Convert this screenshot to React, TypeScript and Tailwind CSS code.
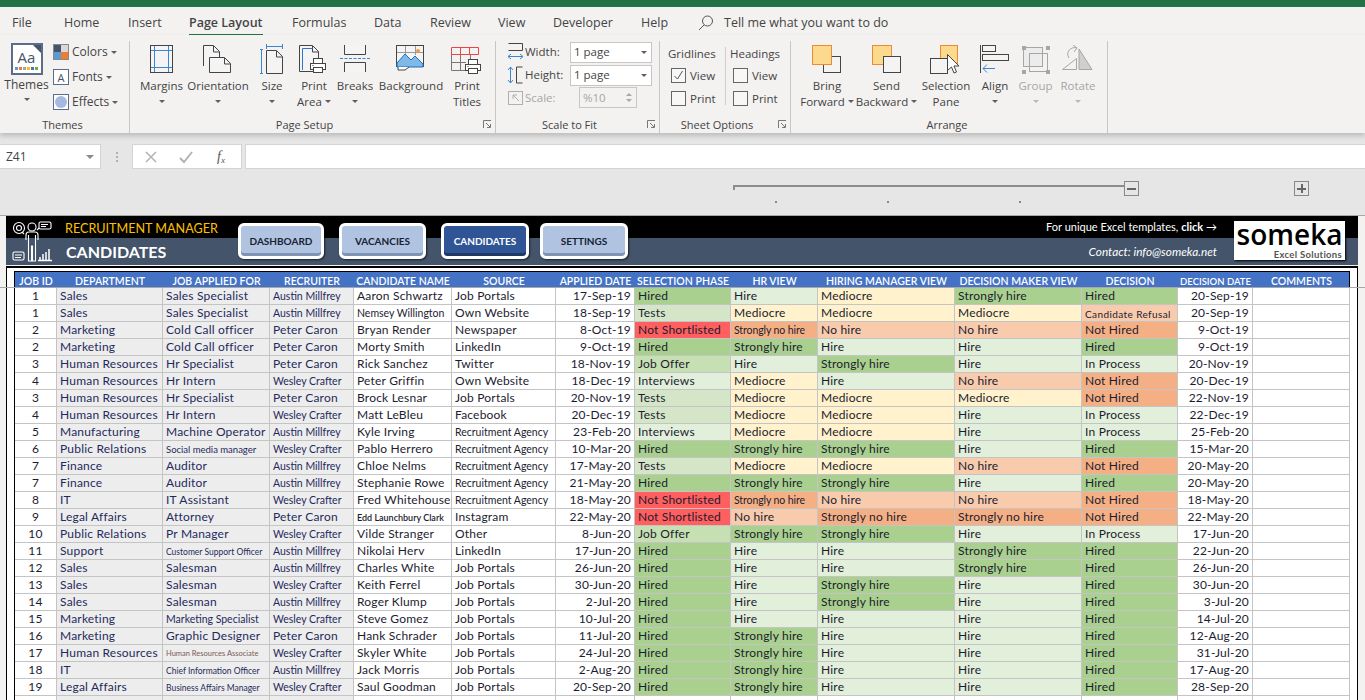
import type { ReactNode } from 'react'

type Row = string[]

const HEADERS = ['JOB ID', 'DEPARTMENT', 'JOB APPLIED FOR', 'RECRUITER', 'CANDIDATE NAME', 'SOURCE', 'APPLIED DATE', 'SELECTION PHASE', 'HR VIEW', 'HIRING MANAGER VIEW', 'DECISION MAKER VIEW', 'DECISION', 'DECISION DATE', 'COMMENTS']

const HR = 'Human Resources'
const JP = 'Job Portals'
const RA = 'Recruitment Agency'
const AM = 'Austin Millfrey'
const WC = 'Wesley Crafter'
const PC = 'Peter Caron'

const ROWS: Row[] = [
  ['1', 'Sales', 'Sales Specialist', AM, 'Aaron Schwartz', JP, '17-Sep-19', 'Hired', 'Hire', 'Mediocre', 'Strongly hire', 'Hired', '20-Sep-19'],
  ['1', 'Sales', 'Sales Specialist', AM, 'Nemsey Willington', 'Own Website', '18-Sep-19', 'Tests', 'Mediocre', 'Mediocre', 'Mediocre', 'Candidate Refusal', '20-Sep-19'],
  ['2', 'Marketing', 'Cold Call officer', PC, 'Bryan Render', 'Newspaper', '8-Oct-19', 'Not Shortlisted', 'Strongly no hire', 'No hire', 'No hire', 'Not Hired', '9-Oct-19'],
  ['2', 'Marketing', 'Cold Call officer', PC, 'Morty Smith', 'LinkedIn', '9-Oct-19', 'Hired', 'Strongly hire', 'Hire', 'Hire', 'Hired', '9-Oct-19'],
  ['3', HR, 'Hr Specialist', PC, 'Rick Sanchez', 'Twitter', '18-Nov-19', 'Job Offer', 'Hire', 'Strongly hire', 'Hire', 'In Process', '20-Nov-19'],
  ['4', HR, 'Hr Intern', WC, 'Peter Griffin', 'Own Website', '18-Dec-19', 'Interviews', 'Mediocre', 'Hire', 'No hire', 'Not Hired', '20-Dec-19'],
  ['3', HR, 'Hr Specialist', PC, 'Brock Lesnar', JP, '20-Nov-19', 'Tests', 'Mediocre', 'Mediocre', 'Mediocre', 'Not Hired', '22-Nov-19'],
  ['4', HR, 'Hr Intern', WC, 'Matt LeBleu', 'Facebook', '20-Dec-19', 'Tests', 'Mediocre', 'Mediocre', 'Hire', 'In Process', '22-Dec-19'],
  ['5', 'Manufacturing', 'Machine Operator', AM, 'Kyle Irving', RA, '23-Feb-20', 'Interviews', 'Mediocre', 'Mediocre', 'Hire', 'In Process', '25-Feb-20'],
  ['6', 'Public Relations', 'Social media manager', WC, 'Pablo Herrero', RA, '10-Mar-20', 'Hired', 'Strongly hire', 'Strongly hire', 'Hire', 'Hired', '15-Mar-20'],
  ['7', 'Finance', 'Auditor', AM, 'Chloe Nelms', RA, '17-May-20', 'Tests', 'Mediocre', 'Mediocre', 'No hire', 'Not Hired', '20-May-20'],
  ['7', 'Finance', 'Auditor', AM, 'Stephanie Rowe', RA, '21-May-20', 'Hired', 'Strongly hire', 'Strongly hire', 'Hire', 'Hired', '20-May-20'],
  ['8', 'IT', 'IT Assistant', WC, 'Fred Whitehouse', RA, '18-May-20', 'Not Shortlisted', 'Strongly no hire', 'No hire', 'No hire', 'Not Hired', '18-May-20'],
  ['9', 'Legal Affairs', 'Attorney', PC, 'Edd Launchbury Clark', 'Instagram', '22-May-20', 'Not Shortlisted', 'No hire', 'Strongly no hire', 'Strongly no hire', 'Not Hired', '22-May-20'],
  ['10', 'Public Relations', 'Pr Manager', WC, 'Vilde Stranger', 'Other', '8-Jun-20', 'Job Offer', 'Strongly hire', 'Strongly hire', 'Hire', 'In Process', '17-Jun-20'],
  ['11', 'Support', 'Customer Support Officer', AM, 'Nikolai Herv', 'LinkedIn', '17-Jun-20', 'Hired', 'Hire', 'Hire', 'Strongly hire', 'Hired', '22-Jun-20'],
  ['12', 'Sales', 'Salesman', AM, 'Charles White', JP, '26-Jun-20', 'Hired', 'Hire', 'Hire', 'Strongly hire', 'Hired', '26-Jun-20'],
  ['13', 'Sales', 'Salesman', WC, 'Keith Ferrel', JP, '30-Jun-20', 'Hired', 'Hire', 'Strongly hire', 'Hire', 'Hired', '30-Jun-20'],
  ['14', 'Sales', 'Salesman', AM, 'Roger Klump', JP, '2-Jul-20', 'Hired', 'Hire', 'Strongly hire', 'Hire', 'Hired', '3-Jul-20'],
  ['15', 'Marketing', 'Marketing Specialist', WC, 'Steve Gomez', JP, '10-Jul-20', 'Hired', 'Hire', 'Hire', 'Hire', 'Hired', '14-Jul-20'],
  ['16', 'Marketing', 'Graphic Designer', PC, 'Hank Schrader', JP, '11-Jul-20', 'Hired', 'Strongly hire', 'Hire', 'Hire', 'Hired', '12-Aug-20'],
  ['17', HR, 'Human Resources Associate', WC, 'Skyler White', JP, '24-Jul-20', 'Hired', 'Strongly hire', 'Hire', 'Hire', 'Hired', '31-Jul-20'],
  ['18', 'IT', 'Chief Information Officer', AM, 'Jack Morris', JP, '2-Aug-20', 'Hired', 'Strongly hire', 'Hire', 'Hire', 'Hired', '17-Aug-20'],
  ['19', 'Legal Affairs', 'Business Affairs Manager', WC, 'Saul Goodman', JP, '20-Sep-20', 'Hired', 'Strongly hire', 'Hire', 'Hire', 'Hired', '28-Sep-20'],
  ['', '', '', '', '', '', '', '', '', '', '', '', ''],
]

const FILLS: Record<string, string> = {
  'Hired': 'bg-[#a9d08e]',
  'Tests': 'bg-[#d5e6c8]',
  'Job Offer': 'bg-[#c6e0b4]',
  'Interviews': 'bg-[#e2efda]',
  'Not Shortlisted': 'bg-[#ff5f5f]',
  'Hire': 'bg-[#e2efda]',
  'Mediocre': 'bg-[#fff2cc]',
  'Strongly hire': 'bg-[#a9d08e]',
  'No hire': 'bg-[#f8cbad]',
  'Strongly no hire': 'bg-[#f4b084]',
  'Not Hired': 'bg-[#f4b084]',
  'In Process': 'bg-[#e2efda]',
  'Candidate Refusal': 'bg-[#f8cbad]',
}

const SMALL: Record<string, string> = {
  [AM]: 'text-[10.5px] tracking-[0px]',
  [WC]: 'text-[10.5px] tracking-[0px]',
  [RA]: 'text-[10.5px] tracking-[0px]',
  'Nemsey Willington': 'text-[10.5px] tracking-[0px]',
  'Edd Launchbury Clark': 'text-[9px] font-semibold tracking-[0px]',
  'Social media manager': 'text-[9.5px] tracking-[0px]',
  'Customer Support Officer': 'text-[8.5px] tracking-[0px]',
  'Chief Information Officer': 'text-[8.5px] tracking-[0px]',
  'Business Affairs Manager': 'text-[8.5px] tracking-[0px]',
  'Human Resources Associate': 'text-[7.5px] tracking-[0px] text-[#7b5a5a]',
  'Marketing Specialist': 'text-[10.5px] tracking-[0px]',
  'Candidate Refusal': 'text-[10px] tracking-[0.4px]',
}

function Caret({ className = '' }: { className?: string }) {
  return <span className={`inline-block w-0 h-0 border-x-[3px] border-x-transparent border-t-[3px] border-t-[#605e5c] ${className}`} />
}

function Tab({ w, active, children }: { w: string; active?: boolean; children: ReactNode }) {
  return (
    <div className={`${w} shrink-0 h-[28px] flex items-start`}>
      <span className={`pt-[7px] pb-[1px] border-b-[2px] ${active ? 'font-semibold border-[#217346]' : 'border-transparent'}`}>{children}</span>
    </div>
  )
}

function BigButton({ w, icon, lines, caret, dim }: { w: string; icon: ReactNode; lines: string[]; caret?: boolean; dim?: boolean }) {
  return (
    <div className={`${w} shrink-0 flex flex-col items-center ${dim ? 'text-[#a6a6a6]' : ''}`}>
      <div className="h-[35px] flex items-start justify-center">{icon}</div>
      <div className="leading-[16px] text-center whitespace-nowrap">{lines[0]}</div>
      <div className="leading-[15px] h-[15px] flex items-center gap-[3px] whitespace-nowrap">
        {lines[1]}
        {caret && <Caret className={dim ? 'opacity-40' : ''} />}
      </div>
    </div>
  )
}

function Group({ w, label, launcher, children }: { w: string; label: string; launcher?: boolean; children: ReactNode }) {
  return (
    <div className={`${w} shrink-0 h-[92px] mt-[6px] border-r border-[#c8c6c4] flex flex-col`}>
      <div className="flex-1 flex min-h-0">{children}</div>
      <div className={`h-[14px] relative flex items-center justify-center text-[11px] leading-none mb-[2px] ${launcher ? 'pr-[16px]' : 'pr-[4px]'}`}>
        {label}
        {launcher && (
          <svg width="9" height="9" viewBox="0 0 9 9" className="absolute right-[3px] top-[3px]" fill="none" stroke="#777">
            <path d="M.5 8V.5H8M3 3l4 4M4 7.5h3.5V4" />
          </svg>
        )}
      </div>
    </div>
  )
}

const DK = '#444'
const BL = '#3a87d1'
const PG = '#f4f4f4'

function Printer() {
  return (
    <g fill="#fff" stroke={DK}>
      <rect x="3.5" y=".5" width="9" height="5" />
      <rect x=".5" y="5.5" width="15" height="6" />
      <rect x="3.5" y="9.5" width="9" height="5" />
      <path d="M2.5 7.5h1" />
    </g>
  )
}

const IC = {
  margins: (
    <svg width="24" height="30" className="mt-[2px]" fill={PG} stroke={DK}>
      <rect x=".5" y=".5" width="22" height="27" />
      <path d="M4.5 1v26M18.5 1v26M1 5.5h21M1 22.5h21" stroke={BL} fill="none" />
    </svg>
  ),
  orientation: (
    <svg width="30" height="30" className="mt-[2px]" fill={PG} stroke={DK}>
      <path d="M.5 21V.5h10l6 6V12" />
      <path d="M10.5 1v6h6" fill="none" />
      <path d="M6.5 12.5h15l6 6v9h-21z" />
      <path d="M21.5 13v6h6" fill="none" />
    </svg>
  ),
  size: (
    <svg width="24" height="32" fill={PG} stroke={DK}>
      <path d="M1.5 6v25M0 6.5h3M0 30.5h3M6 3.5h17M6.5 1v5M22.5 1v5" stroke={BL} fill="none" />
      <path d="M6.5 7.5h10l6 6v17h-16z" />
      <path d="M16.5 8v6h6" fill="none" />
    </svg>
  ),
  printArea: (
    <svg width="30" height="32" className="mt-[2px]" fill={PG} stroke={DK}>
      <path d="M.5.5h13l6 6v20H.5z" />
      <path d="M13.5 1v6h6" fill="none" />
      <path d="M3.5 25V3.5h10" stroke="#2f75c4" fill="none" />
      <g transform="translate(11 13)"><Printer /></g>
    </svg>
  ),
  breaks: (
    <svg width="30" height="30" className="mt-[2px]" fill={PG} stroke={DK}>
      <path d="M4.5 0v9.5h21V0" />
      <path d="M0 13.5h30" stroke={BL} strokeDasharray="3 1.5" fill="none" />
      <path d="M4.5 27v-9.5h21V27" />
    </svg>
  ),
  background: (
    <svg width="30" height="30" className="mt-[2px]" fill="none" stroke={DK}>
      <rect x=".5" y=".5" width="27" height="21" fill={PG} />
      <path d="M9.5 1v9M19.5 1v9M1 7.5h26" stroke="#999" />
      <circle cx="22" cy="6" r="2" fill="#f39a3c" stroke="none" />
      <path d="M1 18l8-9 6 6 4-4 8 8v3H1z" fill="#7fb9e8" stroke="#1f6fc0" />
      <path d="M2 22v3h7l4-3" fill="#fff" />
    </svg>
  ),
  printTitles: (
    <svg width="32" height="30" className="mt-[3px]" fill="none" stroke="#777">
      <path d="M.5 8.5v16h18M9.5 8v16M19.5 8v6M1 16.5h14" />
      <path d="M.5 8.5v-7h27v7zM9.5 1v7M18.5 1v7" stroke="#ef4444" />
      <g transform="translate(14 13)"><Printer /></g>
    </svg>
  ),
  bring: (
    <svg width="30" height="30" className="mt-[2px]" fill="none">
      <rect x="11.5" y="11.5" width="17" height="16" fill="#f4f4f4" stroke={DK} />
      <rect x=".5" y=".5" width="19" height="19" fill="#fbd98d" stroke="#ee8a35" />
    </svg>
  ),
  send: (
    <svg width="30" height="30" className="mt-[2px]" fill="none">
      <rect x=".5" y=".5" width="19" height="19" fill="#fbd98d" stroke="#ee8a35" />
      <rect x="11.5" y="11.5" width="17" height="16" fill="#f4f4f4" stroke={DK} />
    </svg>
  ),
  selection: (
    <svg width="32" height="32" className="mt-[2px]" fill="none">
      <rect x="10.5" y=".5" width="17" height="19" fill="#fbd98d" stroke="#ee8a35" />
      <rect x=".5" y="13.5" width="17" height="15" fill="#f4f4f4" stroke={DK} />
      <path d="M17.5 9.5v16l4-3.5 2.5 6 2.500-1-2.500-6h5z" fill="#fff" stroke={DK} />
    </svg>
  ),
  align: (
    <svg width="30" height="30" className="mt-[2px]" fill="none" stroke={DK}>
      <path d="M.5 0v28" />
      <rect x="2.5" y=".5" width="13" height="6" fill={PG} />
      <rect x="2.5" y="9.5" width="26" height="6" fill={PG} />
      <path d="M15 23.5H3M7 19.5l-4 4 4 4" stroke={BL} />
    </svg>
  ),
  group: (
    <svg width="30" height="30" className="mt-[2px]" fill="none" stroke="#a6a6a6">
      <rect x="2.5" y="2.5" width="19" height="19" fill="#ececec" />
      <rect x="8.5" y="8.5" width="18" height="18" />
      <g fill="#a6a6a6" stroke="none">
        <rect width="4" height="4" x="1" y="1" /><rect width="4" height="4" x="25" y="1" /><rect width="4" height="4" x="1" y="25" /><rect width="4" height="4" x="25" y="25" />
      </g>
    </svg>
  ),
  rotate: (
    <svg width="32" height="30" className="mt-[2px]" fill="none" stroke="#a6a6a6">
      <path d="M.5 24.5l14-11v11z" fill="#f3f2f1" />
      <path d="M17 24.5V4l13 20.5z" fill="#cfcfcf" />
      <path d="M7 13C3 7 9 1 15 3M11 0l4 3-3 4" />
    </svg>
  ),
}

function Check({ on, label }: { on?: boolean; label: string }) {
  return (
    <div className="flex items-center gap-[4px] h-[15px]">
      <span className="w-[15px] h-[15px] bg-[#f7f7f7] border border-[#666] flex items-center justify-center">
        {on && (
          <svg width="11" height="11" fill="none" stroke="#555"><path d="M1.5 6l3 3 5-8" /></svg>
        )}
      </span>
      {label}
    </div>
  )
}

function Combo({ w, value, dim }: { w: string; value: string; dim?: boolean }) {
  return (
    <div className={`${w} h-[21px] border border-[#c8c6c4] flex items-center justify-between pl-[3px] pr-[4px] ${dim ? 'text-[#a6a6a6] bg-[#f3f2f1]' : 'bg-white'}`}>
      {value}
      {dim ? <span className="flex flex-col gap-[3px]"><Caret className="rotate-180 opacity-50" /><Caret className="opacity-50" /></span> : <Caret />}
    </div>
  )
}

function Ribbon() {
  return (
    <div className="h-[98px] bg-[#f3f2f1] flex shadow-[0_3px_5px_rgba(0,0,0,0.18)] relative text-[11.5px] text-[#444] [font-family:'Open_Sans',sans-serif]">
      <Group w="w-[130px]" label="Themes">
        <div className="w-[53px] flex flex-col items-center pt-[2px]">
          <div className="w-[32px] h-[32px] border-2 border-[#5f6b8a] bg-white relative flex flex-col items-center">
            <span className="text-[15px] text-[#44546a] leading-[20px] mt-[2px]">Aa</span>
            <div className="flex gap-[1px]">
              <i className="w-[3px] h-[3px] bg-[#5b9bd5]" /><i className="w-[3px] h-[3px] bg-[#ed7d31]" /><i className="w-[3px] h-[3px] bg-[#a5a5a5]" /><i className="w-[3px] h-[3px] bg-[#ffc000]" /><i className="w-[3px] h-[3px] bg-[#4472c4]" /><i className="w-[3px] h-[3px] bg-[#70ad47]" />
            </div>
            <span className="absolute right-0 top-0 border-[4px] border-t-[#44546a] border-r-[#44546a] border-b-transparent border-l-transparent" />
          </div>
          <div className="mt-[2px] leading-[16px] text-[12px]">Themes</div>
          <Caret className="mt-[5px]" />
        </div>
        <div className="flex flex-col gap-[9px] pt-[3px] text-[12px]">
          <div className="flex items-center gap-[3px] h-[16px]">
            <span className="w-[16px] h-[16px] border border-[#888] grid grid-cols-2 grid-rows-2">
              <i className="bg-[#44546a]" /><i className="bg-[#d9d9d9]" /><i className="bg-[#5b9bd5]" /><i className="bg-[#ed7d31]" />
            </span>
            Colors <Caret />
          </div>
          <div className="flex items-center gap-[3px] h-[16px]">
            <span className="w-[16px] h-[16px] border border-[#5f6b8a] bg-white flex items-center justify-center text-[11px] text-[#44546a] leading-none">A</span>
            Fonts <Caret />
          </div>
          <div className="flex items-center gap-[3px] h-[16px]">
            <span className="w-[16px] h-[16px] border border-[#5f6b8a] bg-white flex items-center justify-center">
              <i className="w-[12px] h-[12px] rounded-full bg-[#a4b8e0]" />
            </span>
            Effects <Caret />
          </div>
        </div>
      </Group>
      <Group w="w-[366px]" label="Page Setup" launcher>
        <div className="flex pl-[7px] pt-[2px]">
          <BigButton w="w-[49px]" icon={IC.margins} lines={['Margins', '']} caret />
          <BigButton w="w-[64px]" icon={IC.orientation} lines={['Orientation', '']} caret />
          <BigButton w="w-[44px]" icon={IC.size} lines={['Size', '']} caret />
          <BigButton w="w-[40px]" icon={IC.printArea} lines={['Print', 'Area']} caret />
          <BigButton w="w-[42px]" icon={IC.breaks} lines={['Breaks', '']} caret />
          <BigButton w="w-[70px]" icon={IC.background} lines={['Background', '']} />
          <BigButton w="w-[42px]" icon={IC.printTitles} lines={['Print', 'Titles']} />
        </div>
      </Group>
      <Group w="w-[164px]" label="Scale to Fit" launcher>
        <div className="flex flex-col pl-[11px] gap-[1px]">
          <div className="flex items-center h-[22px]">
            <svg width="18" height="18" fill="none" stroke={DK}>
              <path d="M1.5 .5h14v7h-14" /><path d="M1 13.5h15M4 11l-3 2.5L4 16M13 11l3 2.5-3 2.5" stroke={BL} />
            </svg>
            <span className="w-[45px]">Width:</span>
            <Combo w="w-[82px]" value="1 page" />
          </div>
          <div className="flex items-center h-[22px]">
            <svg width="18" height="18" fill="none" stroke={DK}>
              <path d="M15.5 1h-6v16h6" /><path d="M3.5 1v16M1 4l2.5-3L6 4M1 14l2.5 3L6 14" stroke={BL} />
            </svg>
            <span className="w-[45px]">Height:</span>
            <Combo w="w-[82px]" value="1 page" />
          </div>
          <div className="flex items-center h-[21px] text-[#a6a6a6]">
            <svg width="18" height="18" fill="none" stroke="#b0b0b0">
              <rect x="1.5" y="2.5" width="14" height="13" /><path d="M6 6l6 6M6 10V6h4" />
            </svg>
            <span className="w-[54px]">Scale:</span>
            <Combo w="w-[58px]" value="%10" dim />
          </div>
        </div>
      </Group>
      <Group w="w-[131px]" label="Sheet Options" launcher>
        <div className="flex pt-[4px] pl-[8px]">
          <div className="w-[57px] flex flex-col">
            <div className="h-[18px] mb-[5px]">Gridlines</div>
            <div className="pl-[3px] flex flex-col gap-[8px]">
              <Check on label="View" />
              <Check label="Print" />
            </div>
          </div>
          <div className="w-px h-[58px] mt-[2px] bg-[#d2d0ce]" />
          <div className="pl-[4px] flex flex-col">
            <div className="h-[18px] mb-[5px]">Headings</div>
            <div className="pl-[3px] flex flex-col gap-[8px]">
              <Check label="View" />
              <Check label="Print" />
            </div>
          </div>
        </div>
      </Group>
      <Group w="w-[317px]" label="Arrange">
        <div className="flex pl-[6px] pt-[2px]">
          <BigButton w="w-[60px]" icon={IC.bring} lines={['Bring', 'Forward']} caret />
          <BigButton w="w-[59px]" icon={IC.send} lines={['Send', 'Backward']} caret />
          <BigButton w="w-[60px]" icon={IC.selection} lines={['Selection', 'Pane']} />
          <BigButton w="w-[38px]" icon={IC.align} lines={['Align', '']} caret />
          <BigButton w="w-[43px]" icon={IC.group} lines={['Group', '']} caret dim />
          <BigButton w="w-[42px]" icon={IC.rotate} lines={['Rotate', '']} caret dim />
        </div>
      </Group>
    </div>
  )
}

function FormulaBar() {
  return (
    <div className="mt-[11px] h-[25px] flex text-[12px] text-[#444] [font-family:'Open_Sans',sans-serif]">
      <div className="w-[101px] bg-white border border-[#d4d4d4] border-l-0 flex items-center justify-between pl-[6px] pr-[6px]">
        Z41
        <span className="w-0 h-0 border-x-[4px] border-x-transparent border-t-[4px] border-t-[#8a8a8a]" />
      </div>
      <div className="w-[31px] flex flex-col items-center justify-center gap-[2px]">
        <i className="w-[2px] h-[2px] bg-[#b0b0b0]" /><i className="w-[2px] h-[2px] bg-[#b0b0b0]" /><i className="w-[2px] h-[2px] bg-[#b0b0b0]" />
      </div>
      <div className="w-[110px] bg-white border border-[#d4d4d4] flex items-center pl-[11px] gap-[21px]">
        <svg width="14" height="14" fill="none" stroke="#b3b3b3" strokeWidth="1.5"><path d="M2 2l10 10M12 2L2 12" /></svg>
        <svg width="14" height="14" fill="none" stroke="#b3b3b3" strokeWidth="2"><path d="M1 8l4 4 8-10" /></svg>
        <span className="ml-[3px] [font-family:'Liberation_Serif',serif] italic text-[#555] text-[14px] leading-none">f<sub className="text-[9px]">x</sub></span>
      </div>
      <div className="flex-1 ml-[3px] bg-white border border-[#d4d4d4] border-r-0" />
    </div>
  )
}

function ScrollControl() {
  return (
    <div className="h-[46px] pt-[16px]">
      <div className="flex items-start pl-[733px]">
        <div className="w-[391px] h-[5px] border-l-2 border-t-2 border-[#8c8c8c]" />
        <div className="w-[15px] h-[15px] -mt-[4px] border border-[#888] flex items-center justify-center">
          <i className="w-[9px] h-[2px] bg-[#666]" />
        </div>
        <div className="ml-[155px] w-[15px] h-[15px] -mt-[4px] border border-[#888] flex items-center justify-center relative">
          <i className="w-[9px] h-[2px] bg-[#666]" />
          <i className="w-[2px] h-[9px] bg-[#666] absolute" />
        </div>
      </div>
      <div className="flex pl-[775px] mt-[5px]">
        <i className="w-[2px] h-[2px] bg-[#888]" />
        <i className="w-[2px] h-[2px] bg-[#888] ml-[110px]" />
        <i className="w-[2px] h-[2px] bg-[#888] ml-[130px]" />
      </div>
    </div>
  )
}

function NavButton({ w, label, active }: { w: string; label: string; active?: boolean }) {
  return (
    <div className={`${w} h-[36px] rounded-[6px] border-[3px] border-white flex items-center justify-center text-[10px] font-bold ${active ? 'bg-[#2f5597] text-white shadow-[inset_0_-3px_0_#1f3864,1px_1px_2px_rgba(0,0,0,0.6)]' : 'bg-[#b0c4e2] text-[#1a2133] shadow-[inset_0_-3px_0_#7f93b5,1px_1px_2px_rgba(0,0,0,0.6)]'}`}>
      {label}
    </div>
  )
}

function PersonLogo() {
  return (
    <svg width="48" height="42" className="mt-[4px] ml-[5px] shrink-0" fill="none" stroke="#fff" strokeWidth="1.1">
      <circle cx="8" cy="8" r="5.5" />
      <circle cx="8" cy="8" r="2.5" />
      <path d="M11 12l2 2" />
      <circle cx="21" cy="7" r="4" />
      <rect x="28" y="2" width="12" height="7" rx="1.5" />
      <path d="M30 4.5h7M30 6.5h5M28 8l-2 2" />
      <path d="M15 20v-5a3 3 0 0 1 3-3h6a3 3 0 0 1 3 3v5M17.5 15v26h3V26h1v15h3V15" />
      <rect x="2" y="32" width="11" height="8" rx="1.5" />
      <path d="M4 35h7M4 37.5h6" />
      <path d="M27 40.5h14M29 40v-3M32 40v-6M35 40v-8M38 40v-11" strokeWidth="1.5" />
    </svg>
  )
}

function Banner() {
  return (
    <div className="h-[49px] flex bg-[linear-gradient(to_bottom,#000_22px,#44546a_22px)] text-white [font-family:Lato,sans-serif]">
      <PersonLogo />
      <div className="w-[179px] pl-[6px] shrink-0">
        <div className="text-[#ffc000] text-[12.6px] h-[22px] leading-[25px] whitespace-nowrap">RECRUITMENT MANAGER</div>
        <div className="text-[16px] font-bold leading-[27px] whitespace-nowrap pl-[1px]">CANDIDATES</div>
      </div>
      <div className="flex gap-[15px] pt-[7px]">
        <NavButton w="w-[86px]" label="DASHBOARD" />
        <NavButton w="w-[87px]" label="VACANCIES" />
        <NavButton w="w-[88px]" label="CANDIDATES" active />
        <div className="-ml-[4px]"><NavButton w="w-[88px]" label="SETTINGS" /></div>
      </div>
      <div className="w-[589px] shrink-0 flex flex-col items-end">
        <div className="h-[22px] leading-[22px] whitespace-nowrap text-[11px]">For unique Excel templates, <span className="font-bold">click</span> →</div>
        <div className="h-[27px] leading-[27px] italic whitespace-nowrap text-[11.8px]">Contact: info@someka.net</div>
      </div>
      <div className="ml-[17px] mt-[5px] w-[111px] h-[39px] bg-white shadow-[1px_1px_2px_#000] flex flex-col items-center text-black">
        <div className="h-[26px] text-[28px] leading-[26px] font-semibold [font-family:'Open_Sans',sans-serif]">someka</div>
        <div className="self-end mt-[2px] pr-[3px] text-[9.5px] leading-[11px] font-bold text-[#555] tracking-[0.3px]">Excel Solutions</div>
      </div>
    </div>
  )
}

const GRID = 'grid grid-cols-[42px_106px_107px_84px_98px_104px_79px_96px_87px_137px_127px_96px_75px_97px]'

function Cell({ value, col }: { value: string; col: number }) {
  const grey = col >= 1 && col <= 3
  const align = col === 0 ? 'justify-center' : col === 6 || col === 12 ? 'justify-end pr-[3px]' : 'pl-[3px]'
  let fill = grey ? 'bg-[#ededed]' : 'bg-white'
  if (col >= 7 && col <= 11 && FILLS[value]) fill = FILLS[value]
  let size = SMALL[value] ? `${SMALL[value]} pt-[2px]` : 'text-[12px] tracking-[0.2px]'
  if (value === 'Strongly no hire' && col === 8) size = 'text-[10.5px] tracking-[-0.1px] pt-[2px]'
  const color = grey ? 'text-[#1f2a5c]' : 'text-[#1c1c30]'
  return (
    <div className={`h-[17px] border-r border-b border-[#c4c4c4] flex items-center overflow-hidden whitespace-nowrap ${align} ${fill} ${color} ${size}`}>
      {value}
    </div>
  )
}

function Sheet() {
  return (
    <div className="flex-1 min-h-0 relative bg-[#f3f2f1] pl-[6px] pr-[7px] border-t border-[#a8a8a8]">
      <Banner />
      <div className="border-t-2 border-l border-r border-black bg-white px-[8px] pt-[3px] mt-[1px] h-[500px] [font-family:Lato,sans-serif]">
        <div className="border-x border-t border-black -mx-[1px]">
          <div className={`${GRID} h-[16px] pt-[2px] bg-[#4472c4] text-white font-semibold text-[10.5px]`}>
            {HEADERS.map((h) => (
              <div key={h} className={`flex items-center justify-center whitespace-nowrap ${h === 'DECISION DATE' ? 'text-[9.5px]' : ''}`}>{h}</div>
            ))}
          </div>
          {ROWS.map((r, i) => (
            <div key={i} className={GRID}>
              {[...r, ''].map((v, c) => <Cell key={c} value={v} col={c} />)}
            </div>
          ))}
        </div>
      </div>
      <div className="absolute left-0 right-0 top-[71px] h-px bg-[#a8a8a8]" />
    </div>
  )
}

export default function App() {
  return (
    <div className="w-[1365px] h-[700px] overflow-hidden flex flex-col bg-[#e6e6e6]">
      <div className="h-[7px] bg-[#217346] shrink-0" />
      <div className="h-[28px] shrink-0 bg-[#f3f2f1] flex items-start text-[12.5px] text-[#444] pl-[12px] [font-family:'Open_Sans',sans-serif]">
        <Tab w="w-[52px]">File</Tab>
        <Tab w="w-[64px]">Home</Tab>
        <Tab w="w-[61px]">Insert</Tab>
        <Tab w="w-[103px]" active>Page Layout</Tab>
        <Tab w="w-[82px]">Formulas</Tab>
        <Tab w="w-[56px]">Data</Tab>
        <Tab w="w-[68px]">Review</Tab>
        <Tab w="w-[55px]">View</Tab>
        <Tab w="w-[88px]">Developer</Tab>
        <Tab w="w-[57px]">Help</Tab>
        <svg width="16" height="16" fill="none" stroke="#555" className="mr-[10px] mt-[8px]"><circle cx="9.5" cy="6" r="5" /><path d="M6 10l-5 5" /></svg>
        <span className="pt-[7px]">Tell me what you want to do</span>
      </div>
      <Ribbon />
      <FormulaBar />
      <ScrollControl />
      <Sheet />
    </div>
  )
}
